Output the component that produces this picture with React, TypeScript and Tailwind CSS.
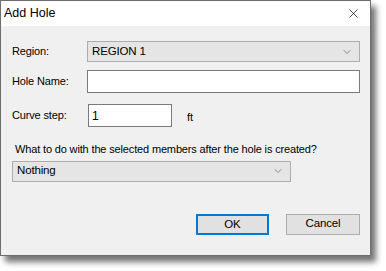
import { ChevronDown, X } from 'lucide-react'

function Combo({ value, className }: { value: string; className: string }) {
  return (
    <div
      className={`flex h-[21px] items-center justify-between border border-[#adadad] bg-[#e5e5e5] pl-[4px] pr-[6px] text-[11.5px] text-black ${className}`}
    >
      <span>{value}</span>
      <ChevronDown size={12} strokeWidth={1.25} className="text-[#505050]" />
    </div>
  )
}

export default function App() {
  return (
    <div className="h-[271px] w-[386px] overflow-hidden bg-white font-['Liberation_Sans',Arial,sans-serif]">
      <div className="flex h-[256px] w-[371px] flex-col border border-[#6d6d6d] bg-[#f0f0f0] shadow-[5px_6px_6px_rgba(0,0,0,0.55)]">
        {/* Title bar */}
        <div className="flex h-[25px] shrink-0 items-center justify-between bg-white pl-[3px] pr-[9px]">
          <span className="text-[12.5px] text-black">Add Hole</span>
          <X size={15} strokeWidth={1.1} className="text-black" />
        </div>

        <div className="flex flex-1 flex-col pl-[11px] pr-[10px] text-[11px] tracking-[-0.15px] text-black">
          <div className="mt-[15px] flex items-center">
            <span className="w-[75px]">Region:</span>
            <Combo value="REGION 1" className="flex-1" />
          </div>

          <div className="mt-[8px] flex items-center">
            <span className="w-[75px]">Hole Name:</span>
            <div className="h-[23px] flex-1 border border-[#7a7a7a] bg-white" />
          </div>

          <div className="mt-[11px] flex items-center">
            <span className="w-[76px]">Curve step:</span>
            <div className="flex h-[23px] w-[84px] items-center border border-[#7a7a7a] bg-white pl-[3px] text-[12px]">
              1
            </div>
            <span className="ml-[15px] mt-[3px]">ft</span>
          </div>

          <div className="mt-[14px] pl-[3px]">What to do with the selected members after the hole is created?</div>

          <Combo value="Nothing" className="mt-[3px] w-[279px]" />

          <div className="mt-[32px] flex justify-end gap-[17px]">
            <button
              type="button"
              className="h-[21px] w-[73px] border-2 border-[#0078d7] bg-[#e1e1e1] text-[11.5px] text-black"
            >
              OK
            </button>
            <button
              type="button"
              className="h-[21px] w-[74px] border border-[#adadad] bg-[#e1e1e1] text-[11.5px] text-black"
            >
              Cancel
            </button>
          </div>
        </div>
      </div>
    </div>
  )
}
